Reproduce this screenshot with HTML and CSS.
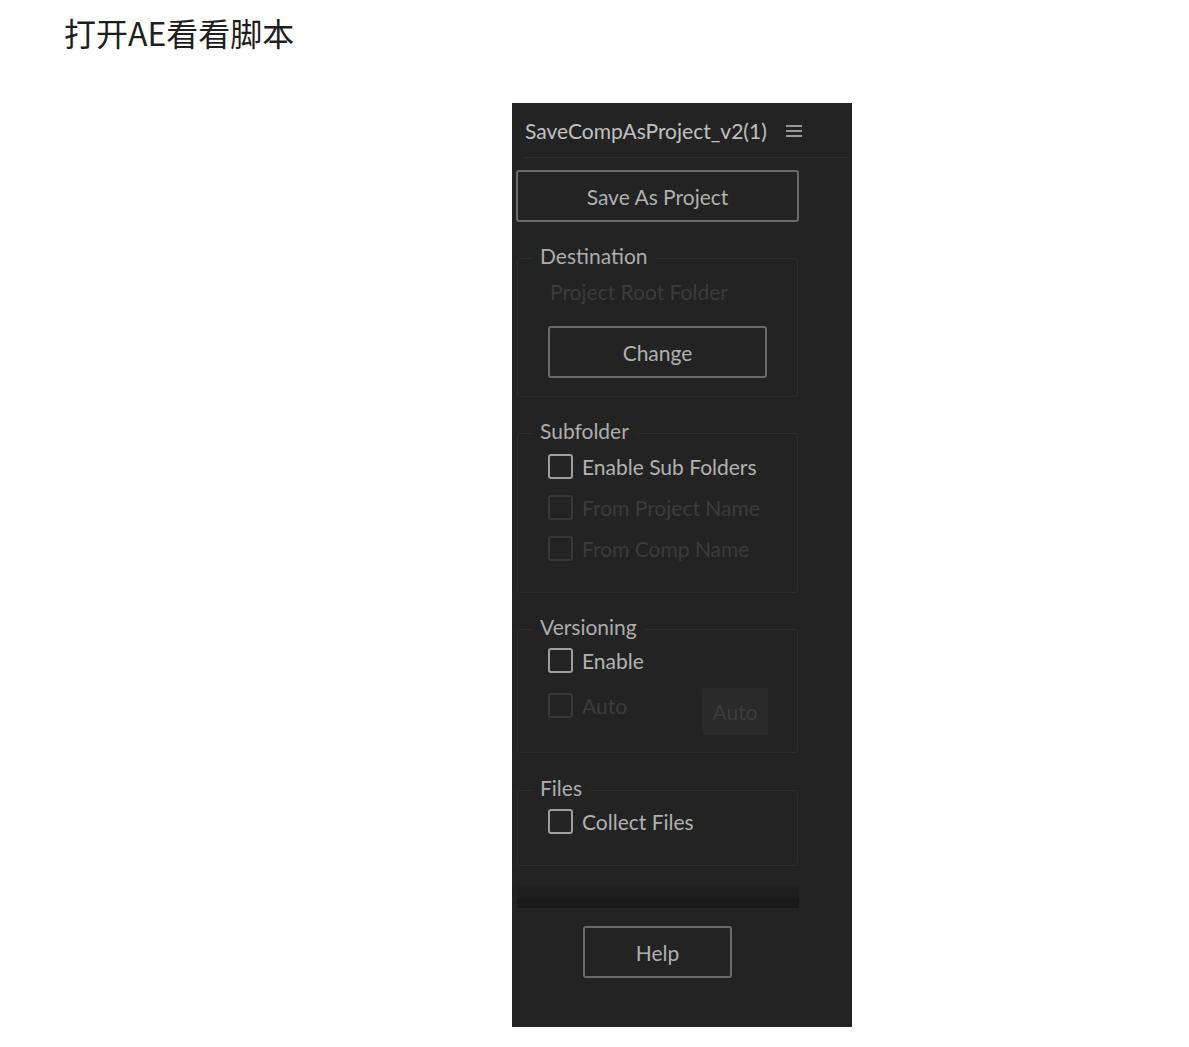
FILE: index.html
```html
<!DOCTYPE html>
<html lang="zh">
<head>
<meta charset="utf-8">
<title>SaveCompAsProject</title>
<link rel="stylesheet" href="styles.css">
</head>
<body>
<h1 class="page-title">打开AE看看脚本</h1>
<div class="panel">
  <div class="panel-header">
    <span class="panel-title">SaveCompAsProject_v2(1)</span>
    <svg class="menu-icon" width="16" height="12" viewBox="0 0 16 12">
      <rect x="0" y="0" width="16" height="2" fill="#9a9a9a"/>
      <rect x="0" y="5" width="16" height="2" fill="#9a9a9a"/>
      <rect x="0" y="10" width="16" height="2" fill="#9a9a9a"/>
    </svg>
  </div>
  <div class="panel-body">
    <button class="btn btn-save">Save As Project</button>

    <fieldset class="group group-dest">
      <legend>Destination</legend>
      <div class="group-content">
        <div class="path-text">Project Root Folder</div>
        <button class="btn btn-change">Change</button>
      </div>
    </fieldset>

    <fieldset class="group group-sub">
      <legend>Subfolder</legend>
      <div class="group-content">
        <label class="check"><span class="box"></span><span class="check-label">Enable Sub Folders</span></label>
        <label class="check disabled"><span class="box"></span><span class="check-label">From Project Name</span></label>
        <label class="check disabled"><span class="box"></span><span class="check-label">From Comp Name</span></label>
      </div>
    </fieldset>

    <fieldset class="group group-ver">
      <legend>Versioning</legend>
      <div class="group-content">
        <label class="check"><span class="box"></span><span class="check-label">Enable</span></label>
        <div class="auto-row">
          <label class="check disabled check-auto"><span class="box"></span><span class="check-label">Auto</span></label>
          <button class="btn-auto">Auto</button>
        </div>
      </div>
    </fieldset>

    <fieldset class="group group-files">
      <legend>Files</legend>
      <div class="group-content">
        <label class="check"><span class="box"></span><span class="check-label">Collect Files</span></label>
      </div>
    </fieldset>

    <div class="dark-bar"></div>

    <button class="btn btn-help">Help</button>
  </div>
</div>
</body>
</html>
```

FILE: styles.css
```css
html, body {
  margin: 0;
  padding: 0;
  background: #ffffff;
}

.page-title {
  margin: 9px 0 0 64px;
  font-family: "Noto Sans CJK SC", "Noto Sans", sans-serif;
  font-size: 32px;
  line-height: 46px;
  font-weight: 400;
  color: #1e1e1e;
}

.panel {
  margin: 48px 0 0 512px;
  width: 340px;
  height: 924px;
  background: #232323;
  font-family: "Lato", "Liberation Sans", sans-serif;
  font-size: 21px;
  color: #b0b0b0;
}

.panel-header {
  display: flex;
  align-items: center;
  height: 54px;
  margin: 0 4px 0 13px;
  border-bottom: 1px solid #2f2f2f;
}

.panel-title {
  font-size: 21px;
  color: #c0c0c0;
}

.menu-icon {
  margin-left: 19px;
  margin-top: 2px;
}

.panel-body {
  width: 283px;
  padding: 12px 0 0 4px;
  display: flex;
  flex-direction: column;
}

.btn {
  box-sizing: border-box;
  height: 52px;
  background: transparent;
  border: 2px solid #6a6a6a;
  border-radius: 3px;
  font-family: inherit;
  font-size: 21px;
  color: #b0b0b0;
  padding: 0;
}

.btn-save {
  width: 283px;
}

.group {
  margin: 23px 1px 0;
  padding: 0 0 0 14px;
  border: 1px solid #2d2d2d;
  border-radius: 3px;
  min-width: 0;
}

.group legend {
  padding: 0 8px 4px;
  line-height: 22px;
  font-size: 21px;
  color: #adadad;
}

.group-content {
  padding-left: 16px;
  display: flex;
  flex-direction: column;
}

.group-dest {
  padding-bottom: 18px;
}

.path-text {
  margin-top: 9px;
  line-height: 24px;
  padding-left: 2px;
  color: #3c3c3c;
}

.btn-change {
  margin-top: 22px;
  width: 219px;
}

.group-sub {
  padding-bottom: 23px;
}

.check {
  display: flex;
  align-items: center;
  height: 41px;
}

.box {
  box-sizing: border-box;
  width: 25px;
  height: 25px;
  border: 2px solid #9e9e9e;
  border-radius: 3px;
  flex: none;
}

.check-label {
  margin-left: 9px;
  color: #b2b2b2;
}

.check.disabled .box {
  border-color: #383838;
}

.check.disabled .check-label {
  color: #3c3c3c;
}

.group-ver {
  padding-bottom: 17px;
}

.group-ver .group-content {
  margin-top: -2px;
}

.auto-row {
  display: flex;
  justify-content: space-between;
  align-items: flex-start;
  width: 220px;
  margin-top: 7px;
}

.check-auto {
  height: 25px;
  margin-top: 5px;
}

.btn-auto {
  width: 66px;
  height: 47px;
  border: none;
  border-radius: 2px;
  background: #2a2a2a;
  font-family: inherit;
  font-size: 21px;
  color: #3d3d3d;
  padding: 0;
}

.group-files {
  margin-top: 24px;
  padding-bottom: 23px;
}

.group-files .group-content {
  margin-top: -2px;
}

.dark-bar {
  margin: 19px 0 0 1px;
  width: 282px;
  height: 23px;
  background: linear-gradient(#1f1f1f 0, #1f1f1f 55%, #1a1a1a 60%, #1a1a1a 100%);
}

.btn-help {
  width: 149px;
  margin: 18px auto 0;
}
```
